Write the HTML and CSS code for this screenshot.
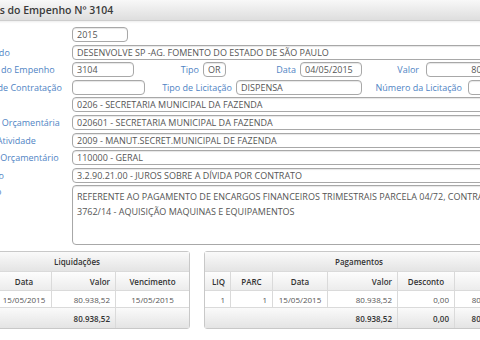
FILE: index.html
```html
<!DOCTYPE html>
<html lang="pt-BR">
<head>
    <meta charset="UTF-8">
    <meta name="viewport" content="width=device-width, initial-scale=1.0">
    <title>Dados do Empenho</title>
    <link rel="stylesheet" href="styles.css">
</head>
<body>
    <div class="page">
        <div class="title-bar">
            <h1>Dados do Empenho Nº 3104</h1>
        </div>

        <div class="form">
            <div class="row">
                <label class="lbl">Ano</label>
                <input class="fld w56" value="2015" readonly>
            </div>
            <div class="row">
                <label class="lbl">Favorecido</label>
                <input class="fld wide" value="DESENVOLVE SP -AG. FOMENTO DO ESTADO DE SÃO PAULO" readonly>
            </div>
            <div class="row">
                <label class="lbl">Número do Empenho</label>
                <input class="fld w62" value="3104" readonly>
                <label class="lbl-in w69">Tipo</label>
                <input class="fld w23" value="OR" readonly>
                <label class="lbl-in w74">Data</label>
                <input class="fld w62" value="04/05/2015" readonly>
                <label class="lbl-in w64">Valor</label>
                <input class="fld w91 num" value="80.938,52" readonly>
            </div>
            <div class="row">
                <label class="lbl">Regime de Contratação</label>
                <input class="fld w73" value="" readonly>
                <label class="lbl-in w91">Tipo de Licitação</label>
                <input class="fld w126" value="DISPENSA" readonly>
                <label class="lbl-in w106">Número da Licitação</label>
                <input class="fld w62" value="" readonly>
            </div>
            <div class="row">
                <label class="lbl">Órgão</label>
                <input class="fld wide" value="0206 - SECRETARIA MUNICIPAL DA FAZENDA" readonly>
            </div>
            <div class="row">
                <label class="lbl">Unidade Orçamentária</label>
                <input class="fld wide" value="020601 - SECRETARIA MUNICIPAL DA FAZENDA" readonly>
            </div>
            <div class="row">
                <label class="lbl">Projeto Atividade</label>
                <input class="fld wide" value="2009 - MANUT.SECRET.MUNICIPAL DE FAZENDA" readonly>
            </div>
            <div class="row">
                <label class="lbl">Recurso Orçamentário</label>
                <input class="fld wide" value="110000 - GERAL" readonly>
            </div>
            <div class="row">
                <label class="lbl">Elemento</label>
                <input class="fld wide" value="3.2.90.21.00 - JUROS SOBRE A DÍVIDA POR CONTRATO" readonly>
            </div>
            <div class="row row-area">
                <label class="lbl">Histórico</label>
                <textarea class="fld area" readonly>REFERENTE AO PAGAMENTO DE ENCARGOS FINANCEIROS TRIMESTRAIS PARCELA 04/72, CONTRATO Nº
3762/14 - AQUISIÇÃO MAQUINAS E EQUIPAMENTOS</textarea>
            </div>
        </div>

        <div class="grids">
            <table class="grid liq">
                <colgroup>
                    <col style="width: 32px">
                    <col style="width: 55px">
                    <col style="width: 64px">
                    <col style="width: 73px">
                </colgroup>
                <tr class="cap"><th colspan="4">Liquidações</th></tr>
                <tr class="head">
                    <th class="r">Nº</th>
                    <th>Data</th>
                    <th class="r">Valor</th>
                    <th>Vencimento</th>
                </tr>
                <tr class="data">
                    <td class="r">1</td>
                    <td class="c">15/05/2015</td>
                    <td class="r">80.938,52</td>
                    <td class="c">15/05/2015</td>
                </tr>
                <tr class="total">
                    <td colspan="2"></td>
                    <td class="r">80.938,52</td>
                    <td></td>
                </tr>
            </table>

            <table class="grid pag">
                <colgroup>
                    <col style="width: 26px">
                    <col style="width: 42px">
                    <col style="width: 55px">
                    <col style="width: 70px">
                    <col style="width: 57px">
                    <col style="width: 58px">
                </colgroup>
                <tr class="cap"><th colspan="6">Pagamentos</th></tr>
                <tr class="head">
                    <th class="r">LIQ</th>
                    <th>PARC</th>
                    <th>Data</th>
                    <th class="r">Valor</th>
                    <th>Desconto</th>
                    <th class="r">Pago</th>
                </tr>
                <tr class="data">
                    <td class="r">1</td>
                    <td class="r">1</td>
                    <td class="c">15/05/2015</td>
                    <td class="r">80.938,52</td>
                    <td class="r">0,00</td>
                    <td class="r">80.938,52</td>
                </tr>
                <tr class="total">
                    <td colspan="3"></td>
                    <td class="r">80.938,52</td>
                    <td class="r">0,00</td>
                    <td class="r">80.938,52</td>
                </tr>
            </table>
        </div>
    </div>
</body>
</html>
```

FILE: styles.css
```css
html, body {
    margin: 0;
    padding: 0;
    overflow: hidden;
    background-color: #fff;
}

body {
    font-family: "Open Sans", Arial, sans-serif;
    font-size: 9px;
    color: #555;
}

/* a pagina e mais larga que a janela, o recorte corta a esquerda */
.page {
    width: 600px;
    margin-left: -40px;
}

.title-bar {
    height: 20px;
    background: linear-gradient(#f8f8f8, #dedede);
    border-bottom: 1px solid #cdcdcd;
    box-shadow: 0 1px 2px rgba(0, 0, 0, 0.08);
}

.title-bar h1 {
    margin: 0;
    padding-left: 13px;
    font-size: 10.5px;
    font-weight: 600;
    line-height: 20px;
    color: #3a3a3a;
}

.form {
    padding-top: 6px;
}

.row {
    display: flex;
    align-items: center;
    height: 15px;
    margin-bottom: 2.6px;
}

.row-area {
    align-items: flex-start;
    height: auto;
}

.lbl {
    flex: none;
    width: 112px;
    padding-left: 4px;
    box-sizing: border-box;
    color: #4f84c4;
    white-space: nowrap;
}

.lbl-in {
    flex: none;
    padding-right: 4px;
    box-sizing: border-box;
    text-align: right;
    color: #4f84c4;
    white-space: nowrap;
}

.fld {
    flex: none;
    box-sizing: border-box;
    height: 15px;
    margin: 0;
    padding: 0 4px;
    border: 1px solid #a8a8a8;
    border-radius: 4px;
    background-color: #fff;
    box-shadow: inset 0 1px 1px rgba(0, 0, 0, 0.1);
    font: inherit;
    color: #555;
    outline: none;
}

.fld.num {
    text-align: right;
}

.fld.wide {
    flex: 1;
}

.area {
    flex: 1;
    height: 60px;
    padding: 3px 4px;
    line-height: 15px;
    resize: none;
    overflow: hidden;
}

.w23 { width: 23px; }
.w56 { width: 56px; }
.w62 { width: 62px; }
.w64 { width: 64px; }
.w69 { width: 69px; }
.w73 { width: 73px; }
.w74 { width: 74px; }
.w91 { width: 91px; }
.w106 { width: 106px; padding-right: 6px; }
.w126 { width: 126px; }
.lbl-in.w64 { padding-right: 7px; }

/* grades de liquidacoes e pagamentos */
.grids {
    display: flex;
    align-items: flex-start;
    gap: 14px;
    margin: 6px 0 0 4px;
}

.grid {
    flex: none;
    table-layout: fixed;
    border-collapse: separate;
    border-spacing: 0;
    border: 1px solid #c8c8c8;
    border-radius: 3px;
    font-size: 8px;
    color: #555;
}

.grid th,
.grid td {
    padding: 0 5px;
    border-right: 1px solid #dadada;
    border-bottom: 1px solid #dadada;
    white-space: nowrap;
    overflow: hidden;
}

.grid th:last-child,
.grid td:last-child {
    border-right: none;
}

.grid tr.total td {
    border-bottom: none;
}

.grid tr.cap th {
    height: 19px;
    background: linear-gradient(#fafafa, #e4e4e4);
    color: #333;
    font-weight: 600;
    text-align: center;
}

.grid tr.head th {
    height: 18px;
    background: linear-gradient(#fdfdfd, #ececec);
    color: #333;
    font-weight: 600;
    text-align: center;
}

.grid tr.data td {
    height: 16px;
    background-color: #fff;
}

.grid tr.total td {
    height: 20px;
    background: linear-gradient(#fafafa, #e4e4e4);
    color: #333;
    font-weight: 600;
}

.grid tr.total td:first-child {
    border-right: 1px solid transparent;
}

.grid tr th.r,
.grid tr td.r { text-align: right; }
.grid tr td.c { text-align: center; }
```
